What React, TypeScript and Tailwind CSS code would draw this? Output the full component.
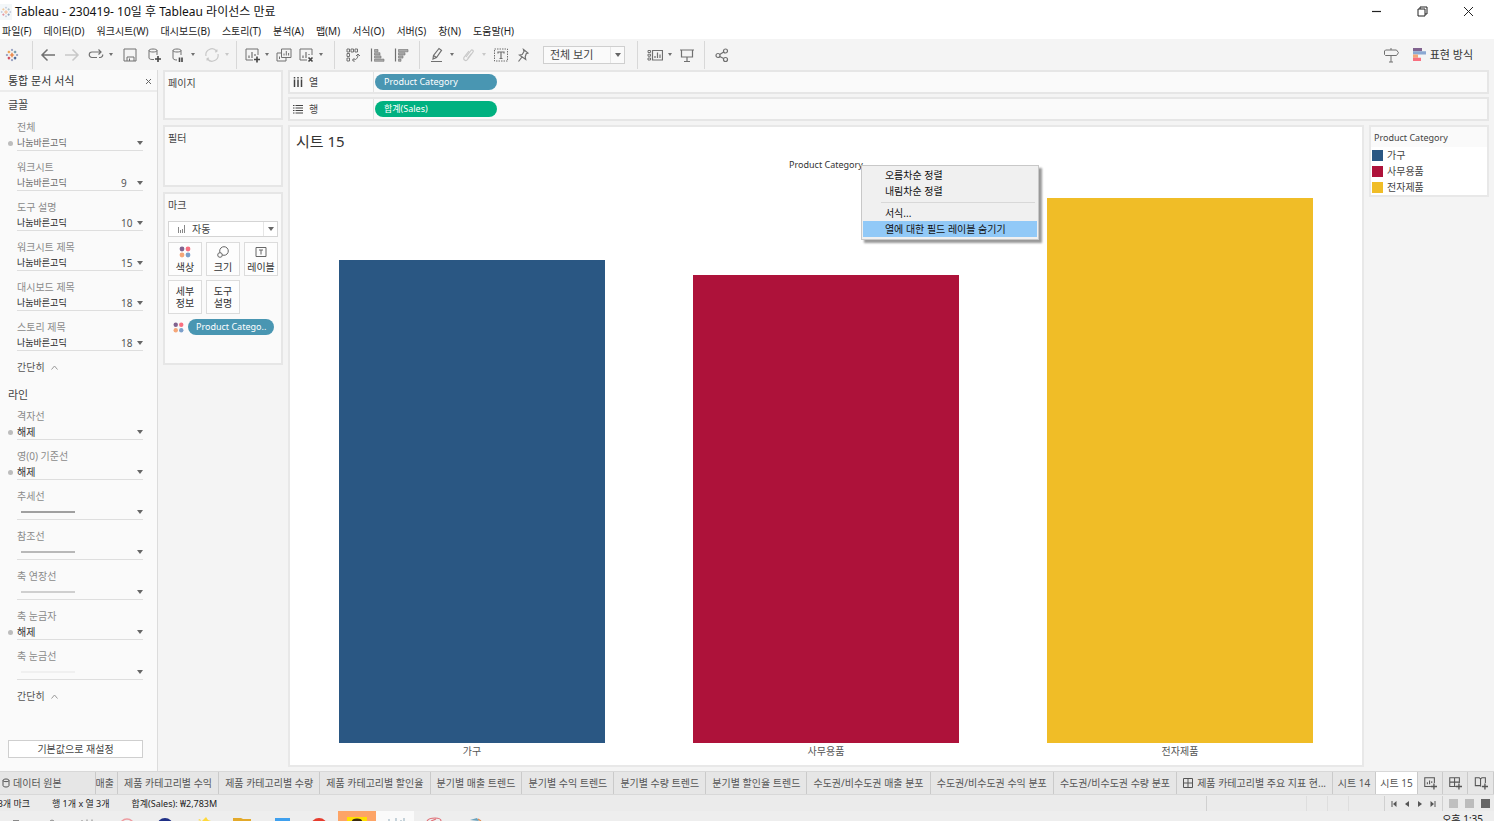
import React from 'react';

const text = {
  title: 'Tableau - 230419- 10일 후 Tableau 라이선스 만료',
  showMe: '표현 방식',
};

const menus = ['파일(F)', '데이터(D)', '워크시트(W)', '대시보드(B)', '스토리(T)', '분석(A)', '맵(M)', '서식(O)', '서버(S)', '창(N)', '도움말(H)'];

interface FontRow {
  label: string;
  size?: string;
  marked?: boolean;
  muted?: boolean;
}

const fontRows: FontRow[] = [
  { label: '전체', marked: true, muted: true },
  { label: '워크시트', size: '9', muted: true },
  { label: '도구 설명', size: '10' },
  { label: '워크시트 제목', size: '15' },
  { label: '대시보드 제목', size: '18' },
  { label: '스토리 제목', size: '18' },
];

interface LineRow {
  label: string;
  line?: string;
}

const lineRows: LineRow[] = [
  { label: '격자선' },
  { label: '영(0) 기준선' },
  { label: '추세선', line: 'bg-[#a0a0a0]' },
  { label: '참조선', line: 'bg-[#b8b8b8]' },
  { label: '축 연장선', line: 'bg-[#cfcfcf]' },
  { label: '축 눈금자' },
  { label: '축 눈금선', line: 'bg-[#f0f0f0]' },
];

const bars = [
  { name: '가구', share: 84.7, color: 'bg-[#2a5783]' },
  { name: '사무용품', share: 82.1, color: 'bg-[#ae123a]' },
  { name: '전자제품', share: 95.6, color: 'bg-[#f0bd27]' },
];

const sheetTabs = [
  '제품 카테고리별 수익',
  '제품 카테고리별 수량',
  '제품 카테고리별 할인율',
  '분기별 매출 트렌드',
  '분기별 수익 트렌드',
  '분기별 수량 트렌드',
  '분기별 할인율 트렌드',
  '수도권/비수도권 매출 분포',
  '수도권/비수도권 수익 분포',
  '수도권/비수도권 수량 분포',
];

const box = 'border-2 border-[#e6e6e6] bg-[#fafafa]';

function Svg({ children, className = 'size-4', box: viewBox = '0 0 16 16' }: { children: React.ReactNode; className?: string; box?: string }) {
  return (
    <svg viewBox={viewBox} className={`shrink-0 ${className}`} fill="none" stroke="currentColor" strokeWidth="1.2" aria-hidden="true">
      {children}
    </svg>
  );
}

function Caret({ className = 'text-[#666]' }: { className?: string }) {
  return (
    <Svg box="0 0 6 4" className={`h-1 w-1.5 ${className}`}>
      <path d="M0 0h6L3 4z" fill="currentColor" stroke="none" />
    </Svg>
  );
}

function LogoMark({ className = 'size-4' }: { className?: string }) {
  return (
    <Svg className={className}>
      <path d="M8 5.500v5M5.500 8h5" stroke="#e8762d" strokeWidth="1.400" />
      <path d="M4.500 3v3M3 4.500h3" stroke="#eb912c" />
      <path d="M11.500 3v3M10 4.500h3" stroke="#59879b" />
      <path d="M4.500 10v3M3 11.500h3" stroke="#c72037" />
      <path d="M11.500 10v3M10 11.500h3" stroke="#1f457e" />
      <path d="M8 1v2.500M6.800 2.200h2.400M8 12.500V15M6.800 13.800h2.400M2.200 6.800v2.400M1 8h2.500M13.800 6.800v2.400M12.500 8H15" stroke="#7b87b0" strokeWidth="1" />
    </Svg>
  );
}

function ColorDots({ className }: { className: string }) {
  return (
    <Svg box="0 0 12 12" className={className}>
      <g stroke="none">
        <circle cx="3" cy="3" r="2.400" fill="#81638f" />
        <circle cx="9" cy="3" r="2.400" fill="#f96f7f" />
        <circle cx="3" cy="9" r="2.400" fill="#f5a678" />
        <circle cx="9" cy="9" r="2.400" fill="#7c9fca" />
      </g>
    </Svg>
  );
}

function Tool({ label, children, menu, dim }: { label: string; children: React.ReactNode; menu?: boolean; dim?: boolean }) {
  return (
    <div className={`flex items-center ${dim ? 'text-[#c8c8c8]' : 'text-[#707070]'}`}>
      <button type="button" aria-label={label} className="flex size-5 items-center justify-center">
        {children}
      </button>
      {menu && (
        <button type="button" aria-label={`${label} 옵션`} className="flex h-5 w-2.5 items-center justify-center">
          <Svg box="0 0 4 3" className="h-[3px] w-1">
            <path d="M0 0h4L2 3z" fill="currentColor" stroke="none" />
          </Svg>
        </button>
      )}
    </div>
  );
}

function Separator() {
  return <div className="h-7 w-px shrink-0 bg-[#d8d8d8]" />;
}

function Toolbar() {
  return (
    <div className="flex h-[31px] shrink-0 items-center bg-[#f4f4f4]">
      <div className="flex w-8 pl-0.5">
        <Tool label="시작 페이지"><LogoMark className="size-3.5" /></Tool>
      </div>
      <Separator />
      <div className="flex gap-1 pr-1 pl-[5px]">
        <Tool label="실행 취소"><Svg><path d="M15 8H2.500M7.500 2.500L2 8l5.500 5.500" strokeWidth="1.500" /></Svg></Tool>
        <Tool label="다시 실행" dim><Svg><path d="M1 8h12.500M8.500 2.500L14 8l-5.500 5.500" strokeWidth="1.500" /></Svg></Tool>
        <Tool label="반복" menu><Svg><path d="M9 10.500H4a2.700 2.700 0 010-5.500h9M10.500 2.500L13 5l-2.500 2.500M11 10.500h1a2.700 2.700 0 002.700-3" /></Svg></Tool>
        <Tool label="저장"><Svg><path d="M2 2h12v12H2zM5 14v-4h7v4M7.500 11.500V14" strokeWidth="1" /></Svg></Tool>
        <Tool label="새 데이터 원본"><Svg><path d="M8 12.500c-3 .3-5-.5-5-1.500V3.500c0-2 8-2 8 0V8M3 3.500c0 2 8 2 8 0" strokeWidth="1" /><path d="M12 9v6M9 12h6" strokeWidth="1.600" stroke="#444" /></Svg></Tool>
        <Tool label="자동 업데이트 일시 중지" menu><Svg><path d="M7 13c-2.500 0-4-.8-4-2V3.500c0-2 8-2 8 0V8M3 3.500c0 2 8 2 8 0" strokeWidth="1" /><path d="M9.500 10.500v4.500M12 10.500v4.500" strokeWidth="1.600" stroke="#444" /></Svg></Tool>
        <Tool label="업데이트 실행" menu dim><Svg><path d="M2 9a6 6 0 0110.500-5M14 7a6 6 0 01-10.500 5M11 5l1.800-.5L13 2.500M5 11l-1.800.5L3 13.500" /></Svg></Tool>
      </div>
      <Separator />
      <div className="flex gap-0.5 pr-2 pl-[5px]">
        <Tool label="새 워크시트" menu><Svg><path d="M9 13H2V2h12v6" strokeWidth="1" /><path d="M5 11V8.500M8 11V5M11 9V7" /><path d="M13 9.500v6M10 12.500h6" strokeWidth="1.600" stroke="#444" /></Svg></Tool>
        <Tool label="복제"><Svg><path d="M5.500 6H1v8h9v-3M5.500 2H15v8.500H5.500zM8 8.500V6.500M10.300 8.500V4M12.600 8.500V6M3.500 12V9.500" strokeWidth="1" /></Svg></Tool>
        <Tool label="시트 지우기" menu><Svg><path d="M9 13H2V2h12v6" strokeWidth="1" /><path d="M5 11V8.500M8 11V5M11 8V7" /><path d="M10.500 10.500l4 4M14.500 10.500l-4 4" strokeWidth="1.600" stroke="#444" /></Svg></Tool>
      </div>
      <Separator />
      <div className="flex gap-1 px-2">
        <Tool label="행과 열 바꾸기"><Svg><path d="M2 2h2.500v3H2zM6 2h2.500v3H6zM10 2h2.500v3H10zM2 6.500h2.500v3H2zM2 11h2.500v3H2z" strokeWidth="1" /><path d="M13 7.500c0 4-2 5.500-5.500 5.500M11 9l2-2 2 2M9.500 11l-2 2 2 2" strokeWidth="1" /></Svg></Tool>
        <Tool label="오름차순 정렬"><Svg><path d="M2.500 1.500v13" /><path d="M5.500 2.500H9v2.300H5.500zM5.500 5.700H11V8H5.500zM5.500 8.900h6.500v2.200H5.500zM5.500 12.100H15v2.200H5.500z" strokeWidth=".6" fill="#aaa" /></Svg></Tool>
        <Tool label="내림차순 정렬"><Svg><path d="M2.500 1.500v13" /><path d="M5.500 2.500H15v2.300H5.500zM5.500 5.700H12V8H5.500zM5.500 8.900H10v2.200H5.500zM5.500 12.100H8v2.200H5.500z" strokeWidth=".6" fill="#aaa" /></Svg></Tool>
      </div>
      <Separator />
      <div className="flex items-center gap-0.5 pr-3 pl-[7px]">
        <Tool label="강조 표시" menu><Svg><path d="M2 14.500h11M4 12l.5-3.500L10 1.500l2.500 1.800L7.500 10.500zM4.500 8.500l3 2" /></Svg></Tool>
        <Tool label="멤버 그룹화" menu dim><Svg><path d="M5 10l5-6.500c1-1.300 3 .2 2 1.500l-5.500 7.500c-1.700 2.300-5 0-3.300-2.300L8 4M6.500 11.500l4-5" /></Svg></Tool>
        <Tool label="마크 레이블 표시"><Svg><path d="M1.500 2h13v12h-13z" strokeDasharray="1.500 1" strokeWidth="1" /><path d="M5 6.500V5h6v1.500M8 5v6.500M6.500 11.500h3" /></Svg></Tool>
        <Tool label="축 고정"><Svg><path d="M8.500 2.500l4.500 3.500-1.800.8-1 3 .5 2.700L4.500 8l2.700-.5L9 4.500zM7 10l-3.500 4.500" /></Svg></Tool>
        <div className="ml-2 flex h-[18px] w-[82px] items-center border border-[#cfcfcf] bg-[#fafafa]">
          <select aria-label="맞춤" className="h-full min-w-0 flex-1 appearance-none pl-1.5 text-[11px] leading-4 text-[#444]">
            <option>전체 보기</option>
          </select>
          <span className="flex h-full w-[14px] items-center justify-center border-l border-[#e6e6e6]"><Caret /></span>
        </div>
      </div>
      <Separator />
      <div className="flex gap-0.5 px-[7px]">
        <Tool label="카드 표시/숨기기" menu><Svg><path d="M5.500 3.500h10v9.500h-10zM8 11V9M10.500 11V5.500M13 11V7.500" /><path d="M1 3.500h2.500v2H1zM1 7.200h2.500v2H1zM1 11h2.500v2H1z" strokeWidth="1" /></Svg></Tool>
        <Tool label="프레젠테이션 모드"><Svg><path d="M1 3h14M2.500 3v7h11V3M8 10v4.500M5 14.500h6" /></Svg></Tool>
      </div>
      <Separator />
      <div className="flex px-[7px]">
        <Tool label="공유"><Svg><circle cx="4" cy="8.500" r="2" /><circle cx="11.500" cy="4" r="2" /><circle cx="11.500" cy="12.500" r="2" /><path d="M5.700 7.500l4-2.500M5.700 9.500l4 2" /></Svg></Tool>
      </div>
      <div className="ml-auto flex items-center gap-3 pr-[21px]">
        <Tool label="안내"><Svg><path d="M8 1v2M8 8.500V15M6 15h4M2.500 3h11l2 2.700-2 2.800h-11l-1-1V4z" strokeWidth="1" /></Svg></Tool>
        <button type="button" className="flex items-center gap-1 text-[11px] leading-4 text-[#333]">
          <Svg box="0 0 13 13" className="size-[13px]">
            <g stroke="none">
              <path d="M0 0h9v3.250H0z" fill="#81638f" />
              <path d="M0 3.250h13V6.500H0z" fill="#8ba8d2" />
              <path d="M0 6.500h5v3.250H0z" fill="#f5a678" />
              <path d="M0 9.750h8V13H0z" fill="#f96f7f" />
            </g>
          </Svg>
          {text.showMe}
        </button>
      </div>
    </div>
  );
}

function Collapse() {
  return (
    <button type="button" className="ml-[17px] flex h-4 items-center gap-1.5 text-[10px] leading-4 text-[#555]">
      간단히
      <Svg box="0 0 7 5" className="h-[5px] w-[7px] text-[#999]"><path d="M.5 4.500l3-3.500 3 3.500" strokeWidth="1" /></Svg>
    </button>
  );
}

function Dot() {
  return <span className="absolute top-[22px] left-2 size-[5px] rounded-full bg-[#bdbdbd]" />;
}

function FormatPane() {
  return (
    <aside className="flex w-[158px] shrink-0 flex-col border-r border-[#dcdcdc] bg-[#fafafa]">
      <div className="flex h-[22px] shrink-0 items-center justify-between border-b-2 border-[#ececec] pt-0.5 pr-[5px] pl-2">
        <h2 className="text-[11px] leading-4 text-[#333]">통합 문서 서식</h2>
        <button type="button" aria-label="닫기">
          <Svg box="0 0 7 7" className="size-[7px] text-[#666]"><path d="M1 1l5 5M6 1L1 6" strokeWidth="1" /></Svg>
        </button>
      </div>
      <h3 className="mt-[5px] mb-[6px] ml-2 text-[11px] leading-4 text-[#444]">글꼴</h3>
      {fontRows.map((row, i) => (
        <div key={row.label} className="relative h-10 shrink-0 pr-[14px] pl-[17px]">
          {row.marked && <Dot />}
          <label htmlFor={`font-${i}`} className="block text-[10px] leading-4 text-[#8a8a8a]">{row.label}</label>
          <div className="flex h-4 items-center border-b border-[#dedede]">
            <select id={`font-${i}`} className={`min-w-0 flex-1 appearance-none text-[9px] leading-4 ${row.muted ? 'text-[#666]' : 'text-[#222]'}`}>
              <option>나눔바른고딕</option>
            </select>
            <span className="w-4 text-[10px] leading-4 text-[#555]">{row.size}</span>
            <Caret />
          </div>
        </div>
      ))}
      <Collapse />
      <h3 className="mt-3 mb-[5px] ml-2 text-[11px] leading-4 text-[#444]">라인</h3>
      {lineRows.map((row, i) => (
        <div key={row.label} className="relative h-10 shrink-0 pr-[14px] pl-[17px]">
          {!row.line && <Dot />}
          <label htmlFor={`line-${i}`} className="block text-[10px] leading-4 text-[#8a8a8a]">{row.label}</label>
          <div className="flex h-4 items-center border-b border-[#dedede]">
            {row.line ? (
              <button id={`line-${i}`} type="button" className="flex h-4 flex-1 items-center pl-1">
                <span className={`h-0.5 w-[54px] ${row.line}`} />
              </button>
            ) : (
              <select id={`line-${i}`} className="min-w-0 flex-1 appearance-none text-[10px] leading-4 text-[#333]">
                <option>해제</option>
              </select>
            )}
            <Caret />
          </div>
        </div>
      ))}
      <Collapse />
      <button type="button" className="mx-2 mt-auto mr-[14px] mb-[13px] h-[18px] border border-[#cfcfcf] bg-white text-[10px] leading-4 text-[#444]">
        기본값으로 재설정
      </button>
    </aside>
  );
}

function MarkButton({ label, children }: { label: React.ReactNode; children?: React.ReactNode }) {
  return (
    <button type="button" className="flex h-[34px] w-[34px] flex-col items-center justify-center gap-[3px] border border-[#dcdcdc] bg-[#fdfdfd] text-[10px] leading-3 text-[#333]">
      {children}
      <span>{label}</span>
    </button>
  );
}

function Cards() {
  return (
    <div className="flex w-[130px] shrink-0 flex-col gap-[5px] px-[5px] text-[10px] leading-4 text-[#444]">
      <section className={`h-[50px] px-[3px] pt-[3px] ${box}`}><h3>페이지</h3></section>
      <section className={`h-[62px] px-[3px] pt-[3px] ${box}`}><h3>필터</h3></section>
      <section className={`h-[173px] px-[3px] pt-[3px] ${box}`}>
        <h3>마크</h3>
        <div className="mt-2 flex h-4 items-center border border-[#d4d4d4] bg-white text-[#888]">
          <Svg box="0 0 8 8" className="ml-[9px] size-2"><path d="M.5 2v6M2.500 5v3M4.500 4v4M6.500 0v8" strokeWidth="1" /></Svg>
          <select aria-label="마크 유형" className="h-full min-w-0 flex-1 appearance-none pl-1.5 text-[10px] leading-3 text-[#444]">
            <option>자동</option>
          </select>
          <span className="flex h-full w-[14px] items-center justify-center border-l border-[#e6e6e6]"><Caret /></span>
        </div>
        <div className="mt-[5px] flex flex-wrap gap-1">
          <MarkButton label="색상"><ColorDots className="size-3" /></MarkButton>
          <MarkButton label="크기">
            <Svg box="0 0 12 12" className="size-3 text-[#666]"><circle cx="7" cy="5" r="4.300" strokeWidth="1" /><circle cx="3" cy="9" r="2.300" strokeWidth="1" fill="#fdfdfd" /></Svg>
          </MarkButton>
          <MarkButton label="레이블">
            <Svg box="0 0 12 12" className="size-3 text-[#666]"><path d="M1 1.500h10v9H1zM4 4h4M6 4v4.500" strokeWidth="1" /></Svg>
          </MarkButton>
          <MarkButton label={<>세부<br />정보</>} />
          <MarkButton label={<>도구<br />설명</>} />
        </div>
        <div className="mt-[5px] flex items-center gap-1 pr-1 pl-[5px]">
          <ColorDots className="size-[11px]" />
          <button type="button" className="h-4 flex-1 rounded-full bg-[#4996b2] pl-2 text-left text-[9px] leading-4 whitespace-nowrap text-white">Product Catego..</button>
        </div>
      </section>
    </div>
  );
}

function Shelf({ label, icon, pill, color }: { label: string; icon: React.ReactNode; pill: string; color: string }) {
  return (
    <div className={`flex h-6 items-center ${box}`}>
      <div className="flex h-full w-[84px] items-center gap-1.5 border-r border-[#e2e2e2] pl-[3px] text-[10px] leading-4 text-[#444]">
        {icon}
        {label}
      </div>
      <button type="button" className={`ml-px h-4 w-[122px] rounded-full pl-[9px] text-left text-[9px] leading-4 text-white ${color}`}>{pill}</button>
    </div>
  );
}

function ContextMenu() {
  const item = 'block h-4 w-full pl-[22px] text-left text-[10px] leading-4 text-[#111]';
  return (
    <div className="absolute top-2 left-full z-10 -ml-0.5 w-[178px] border border-[#c8c8c8] bg-[#f0f0f0] p-px pb-0.5 shadow-[3px_3px_2px_rgba(0,0,0,0.4)]">
      <button type="button" className={item}>오름차순 정렬</button>
      <button type="button" className={item}>내림차순 정렬</button>
      <hr className="mt-[3px] mr-0.5 mb-0.5 ml-[18px] border-[#d8d8d8]" />
      <button type="button" className={item}>서식...</button>
      <button type="button" className={`${item} bg-[#91c9f7]`}>열에 대한 필드 레이블 숨기기</button>
    </div>
  );
}

function Chart() {
  return (
    <section className="flex min-w-0 flex-1 flex-col border-2 border-[#e8e8e8] bg-white px-[5px] pt-1">
      <h1 className="mb-1 pl-px text-[15px] leading-5 text-[#333]">시트 15</h1>
      <div className="flex justify-center text-[9px] leading-4 text-[#333]">
        <div className="relative mt-0.5 h-4">
          Product Category
          <ContextMenu />
        </div>
      </div>
      <div className="grid min-h-0 flex-1 grid-cols-3 items-end">
        {bars.map((bar) => (
          <div key={bar.name} className="flex h-full items-end justify-center">
            <div className={`w-3/4 ${bar.color}`} style={{ height: `${bar.share}%` }} />
          </div>
        ))}
      </div>
      <div className="grid h-[22px] grid-cols-3 text-center text-[10px] leading-4 text-[#555]">
        {bars.map((bar) => <span key={bar.name}>{bar.name}</span>)}
      </div>
    </section>
  );
}

function Legend() {
  return (
    <section className="h-[72px] w-[120px] shrink-0 border-2 border-[#e8e8e8] bg-white text-[10px] text-[#444]">
      <h3 className="bg-[#fafafa] pt-[3px] pb-px pl-[3px] text-[9px] leading-4">Product Category</h3>
      <ul className="pl-px">
        {bars.map((bar) => (
          <li key={bar.name} className="flex h-4 items-center gap-1">
            <span className={`h-[11px] w-[11px] ${bar.color}`} />
            {bar.name}
          </li>
        ))}
      </ul>
    </section>
  );
}

function SheetTabs() {
  const tab = 'flex h-full items-center whitespace-nowrap border-r border-[#cacaca]';
  return (
    <nav className="flex h-6 shrink-0 items-center border-y border-[#d8d8d8] bg-[#e6e6e6] text-[10px] leading-4 text-[#555]">
      <button type="button" className={`${tab} w-24 shrink-0 gap-[3px] pl-0.5`}>
        <Svg box="0 0 8 10" className="h-2.5 w-2"><path d="M1 2.500c0-2 6-2 6 0v5c0 2-6 2-6 0zM1 2.500c0 1.500 6 1.500 6 0" strokeWidth="1" /></Svg>
        데이터 원본
      </button>
      <button type="button" className={`${tab} w-[22px] shrink-0 justify-end overflow-hidden pr-[3px]`}>매출</button>
      {sheetTabs.map((name) => (
        <button key={name} type="button" className={`${tab} grow justify-center`}>{name}</button>
      ))}
      <button type="button" className={`${tab} grow justify-center gap-1`}>
        <Svg box="0 0 10 10" className="size-2.5"><path d="M.5.5h9v9h-9zM5 .5v9M.5 5h9" strokeWidth="1" /></Svg>
        제품 카테고리별 주요 지표 현...
      </button>
      <button type="button" className={`${tab} w-[43px] shrink-0 justify-center`}>시트 14</button>
      <button type="button" className={`${tab} w-[42px] shrink-0 justify-center bg-white`}>시트 15</button>
      <button type="button" aria-label="새 워크시트" className={`${tab} w-[25px] shrink-0 justify-center`}>
        <Svg className="size-3.5"><path d="M9 12H2V2h11v6M5 9.500V7M7.500 9.500V5M10 8V6" /><path d="M12.500 8.500v7M9 12h7" strokeWidth="1.500" /></Svg>
      </button>
      <button type="button" aria-label="새 대시보드" className={`${tab} w-[25px] shrink-0 justify-center`}>
        <Svg className="size-3.5"><path d="M9 12H2V2h11v6M7.500 2v10M2 7h11" /><path d="M12.500 8.500v7M9 12h7" strokeWidth="1.500" /></Svg>
      </button>
      <button type="button" aria-label="새 스토리" className={`${tab} w-[26px] shrink-0 justify-center`}>
        <Svg className="size-3.5"><path d="M8 12l-1-1H1.500V2H6l1.500 1.500L9 2h4v6M7.500 3.500V12" /><path d="M12.500 8.500v7M9 12h7" strokeWidth="1.500" /></Svg>
      </button>
    </nav>
  );
}

function StatusBar() {
  return (
    <footer className="flex h-4 shrink-0 items-center overflow-hidden bg-[#ebebeb] pt-px text-[9px] leading-4 text-[#222]">
      <div className="flex w-[30px] justify-end whitespace-nowrap">3개 마크</div>
      <div className="ml-[22px] whitespace-nowrap">행 1개 x 열 3개</div>
      <div className="ml-[22px] whitespace-nowrap">합계(Sales): ₩2,783M</div>
      <div className="ml-auto flex h-full items-center">
        <span className="h-full w-[100px] border-l border-[#d0d0d0]" />
        <span className="h-full w-[21px] border-l border-[#dedede]" />
        <span className="h-full w-[21px] border-l border-[#dedede]" />
        <span className="h-full w-9 border-l border-[#dedede]" />
        <div className="flex h-full items-center gap-[7px] border-l border-[#d0d0d0] px-1.5 text-[#555]">
          <button type="button" aria-label="처음"><Svg box="0 0 6 6" className="size-1.5"><path d="M5.500 0v6L2 3z" fill="currentColor" stroke="none" /><path d="M1 0v6" strokeWidth="1" /></Svg></button>
          <button type="button" aria-label="이전"><Svg box="0 0 6 6" className="size-1.5"><path d="M5 0v6L1 3z" fill="currentColor" stroke="none" /></Svg></button>
          <button type="button" aria-label="다음"><Svg box="0 0 6 6" className="size-1.5"><path d="M1 0v6l4-3z" fill="currentColor" stroke="none" /></Svg></button>
          <button type="button" aria-label="마지막"><Svg box="0 0 6 6" className="size-1.5"><path d="M.5 0v6L4 3z" fill="currentColor" stroke="none" /><path d="M5 0v6" strokeWidth="1" /></Svg></button>
        </div>
        <div className="flex h-full items-center gap-[7px] border-l border-[#d0d0d0] pr-1 pl-1.5">
          <button type="button" aria-label="격자 보기" className="size-[9px] bg-[#c0c0c0]" />
          <button type="button" aria-label="필름 보기" className="size-[9px] bg-[#bcbcbc]" />
          <button type="button" aria-label="탭 보기" className="size-[9px] bg-[#666]" />
        </div>
      </div>
    </footer>
  );
}

function Taskbar() {
  return (
    <div className="flex h-2.5 shrink-0 justify-between overflow-hidden bg-[#eee]">
      <Svg box="0 0 500 10" className="h-2.5 w-[500px]">
        <path d="M13 9.500h6M50 10q2-2 4 0M82 10V9M87 10V8.500M92 10V8.500" stroke="#888" strokeWidth="1" />
        <path d="M338 0h38v10h-38z" fill="#fda466" stroke="none" />
        <path d="M376 0h38v10h-38z" fill="#fafafa" stroke="none" />
        <path d="M347 6h20v4h-20z" fill="#ffe000" stroke="none" />
        <ellipse cx="357" cy="10" rx="5" ry="2.500" fill="#3b2b10" stroke="none" />
        <circle cx="127" cy="15" r="7" stroke="#ee9a9f" strokeWidth="1.500" />
        <circle cx="165" cy="15" r="8" fill="#1f2f86" stroke="none" />
        <path d="M206 6l2 3 3 1h-9zM198 9l2-1 1 2z" fill="#ffd93b" stroke="none" />
        <path d="M233 7h8l2 1h8v2h-18z" fill="#e3a92a" stroke="none" />
        <path d="M275 7h15v3h-15z" fill="#3fa0ee" stroke="none" />
        <circle cx="319" cy="15.500" r="8.500" fill="#e63c2e" stroke="none" />
        <path d="M389 10V8M396 10V7M401 10V9M404 10V7" stroke="#8fa9b8" strokeWidth="1" />
        <path d="M427 10q2-3 8-3t6 3M431 10l5-2" stroke="#e07078" />
        <path d="M470 9l7-2 2 3z" fill="#6aa2bd" stroke="none" />
        <path d="M478 8l3 2" stroke="#e18a4c" />
      </Svg>
      <time className="mt-0.5 mr-[11px] text-[10px] leading-3 text-[#222]">오후 1:35</time>
    </div>
  );
}

export default function App() {
  return (
    <div className="flex h-screen flex-col overflow-hidden bg-[#f4f4f4] font-['Noto_Sans','Noto_Sans_CJK_KR',sans-serif]">
      <header className="shrink-0 bg-white">
        <div className="flex h-[23px] items-center">
          <LogoMark className="h-4 w-3 bg-[#e8f0f5] opacity-50" />
          <span className="ml-[3px] text-[12px] leading-4 text-[#111]">{text.title}</span>
          <div className="ml-auto flex items-center gap-[35px] pr-5 text-[#222]">
            <button type="button" aria-label="최소화"><Svg box="0 0 11 11" className="size-[11px]"><path d="M1 5.500h9" /></Svg></button>
            <button type="button" aria-label="이전 크기로"><Svg box="0 0 11 11" className="size-[11px]"><path d="M1 3h7v7H1zM3 3V1h7v7H8" strokeWidth="1" /></Svg></button>
            <button type="button" aria-label="닫기"><Svg box="0 0 11 11" className="size-[11px]"><path d="M1 1l9 9M10 1l-9 9" strokeWidth="1" /></Svg></button>
          </div>
        </div>
        <nav className="flex h-4 items-center gap-3 pl-0.5 text-[10px] leading-4 text-[#222]">
          {menus.map((name) => <button key={name} type="button">{name}</button>)}
        </nav>
      </header>
      <Toolbar />
      <main className="flex min-h-0 flex-1">
        <FormatPane />
        <Cards />
        <div className="flex min-w-0 flex-1 flex-col pr-[5px] pb-1">
          <div className="flex flex-col gap-[3px]">
            <Shelf
              label="열"
              pill="Product Category"
              color="bg-[#4996b2]"
              icon={<Svg box="0 0 10 10" className="size-2.5"><path d="M1.500 0v1.500M5 0v1.500M8.500 0v1.500M1.500 2.500V10M5 2.500V10M8.500 2.500V10" strokeWidth="1.500" /></Svg>}
            />
            <Shelf
              label="행"
              pill="합계(Sales)"
              color="bg-[#00b180]"
              icon={<Svg box="0 0 10 10" className="size-2.5"><path d="M0 1.500h1.500M0 4h1.500M0 6.500h1.500M0 9h1.500M2.500 1.500H10M2.500 4H10M2.500 6.500H10M2.500 9H10" strokeWidth="1" /></Svg>}
            />
          </div>
          <div className="mt-1 flex min-h-0 flex-1 gap-[5px]">
            <Chart />
            <Legend />
          </div>
        </div>
      </main>
      <SheetTabs />
      <StatusBar />
      <Taskbar />
    </div>
  );
}
